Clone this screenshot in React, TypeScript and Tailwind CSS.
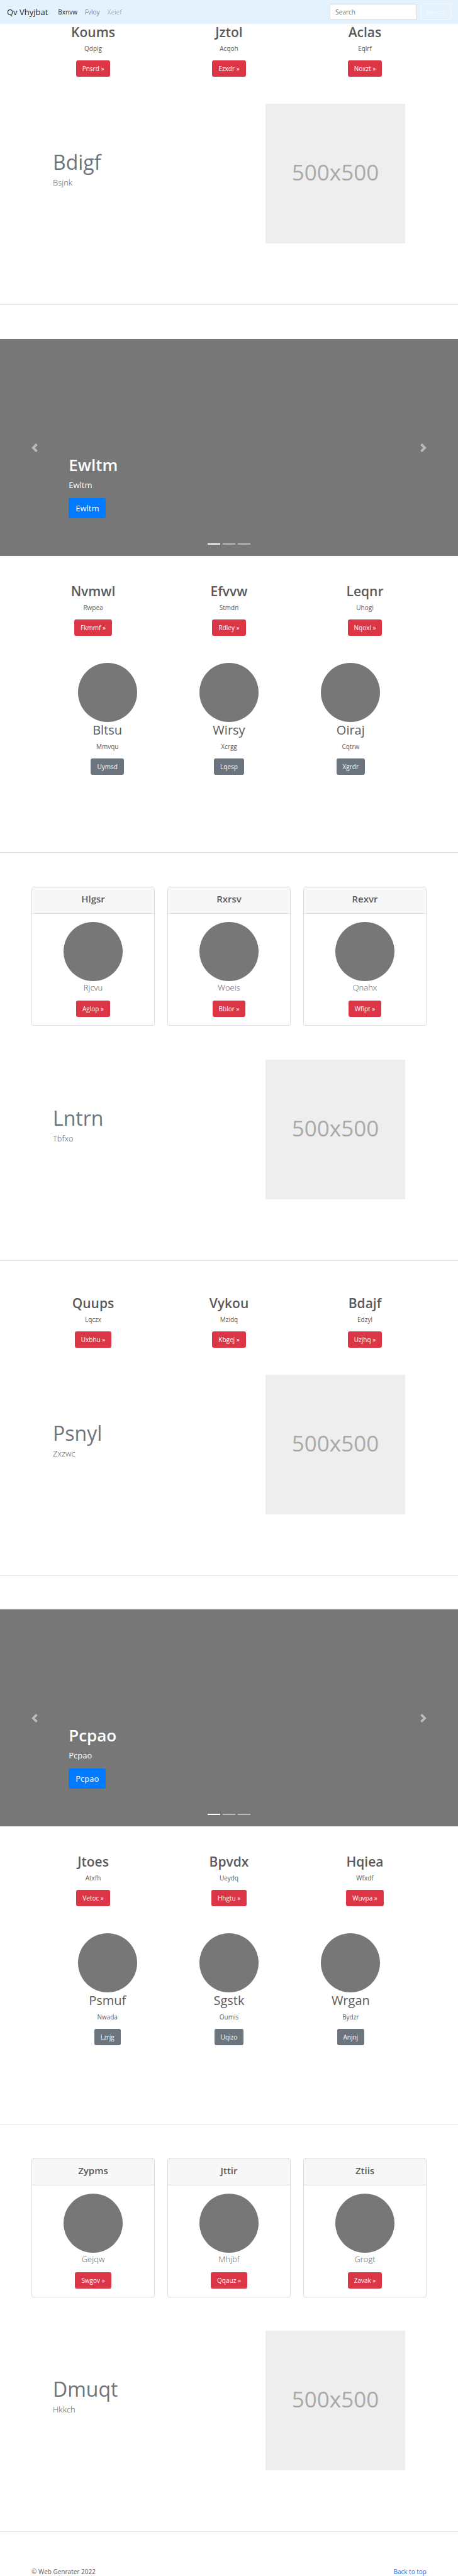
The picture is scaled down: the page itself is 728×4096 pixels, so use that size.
import type { ReactNode } from "react";

type Item = { title: string; text: string; action: string };

const intro: Item[] = [
  { title: "Koums", text: "Qdpig", action: "Pnsrd" },
  { title: "Jztol", text: "Acqoh", action: "Ezxdr" },
  { title: "Aclas", text: "Eqlrf", action: "Noxzt" },
];
const firstColumns: Item[] = [
  { title: "Nvmwl", text: "Rwpea", action: "Fkmmf" },
  { title: "Efvvw", text: "Stmdn", action: "Rdley" },
  { title: "Leqnr", text: "Uhogi", action: "Nqoxl" },
];
const firstCircles: Item[] = [
  { title: "Bltsu", text: "Mmvqu", action: "Uymsd" },
  { title: "Wirsy", text: "Xcrgg", action: "Lqesp" },
  { title: "Oiraj", text: "Cqtrw", action: "Xgrdr" },
];
const firstCards: Item[] = [
  { title: "Hlgsr", text: "Rjcvu", action: "Aglop" },
  { title: "Rxrsv", text: "Woeis", action: "Bblor" },
  { title: "Rexvr", text: "Qnahx", action: "Wfipt" },
];
const middleColumns: Item[] = [
  { title: "Quups", text: "Lqczx", action: "Uxbhu" },
  { title: "Vykou", text: "Mzidq", action: "Kbgej" },
  { title: "Bdajf", text: "Edzyl", action: "Uzjhq" },
];
const secondColumns: Item[] = [
  { title: "Jtoes", text: "Atxfh", action: "Vetoc" },
  { title: "Bpvdx", text: "Ueydq", action: "Hhgtu" },
  { title: "Hqiea", text: "Wfxdf", action: "Wuvpa" },
];
const secondCircles: Item[] = [
  { title: "Psmuf", text: "Nwada", action: "Lzrjg" },
  { title: "Sgstk", text: "Oumis", action: "Uqizo" },
  { title: "Wrgan", text: "Bydzr", action: "Anjnj" },
];
const secondCards: Item[] = [
  { title: "Zypms", text: "Gejqw", action: "Swgov" },
  { title: "Jttir", text: "Mhjbf", action: "Qqauz" },
  { title: "Ztiis", text: "Grogt", action: "Zavak" },
];

function ActionButton({ tone, children }: { tone: string; children: ReactNode }) {
  return (
    <a href="#" className={`flex h-[26px] items-center rounded-[3px] px-[10px] text-[10px] leading-4 text-white ${tone}`}>
      {children}
    </a>
  );
}

function Navbar() {
  return (
    <nav className="flex h-[38px] items-center bg-[#e3f2fd] px-[11px]">
      <a href="#" className="text-[13px] leading-5 text-black/90">Qv Vhyjbat</a>
      <div className="ml-4 flex flex-1 gap-3 text-[10px] leading-4">
        <a href="#" className="text-black/90">Bxnvw</a>
        <a href="#" className="text-black/50">Fvloy</a>
        <a href="#" className="text-black/30">Xeief</a>
      </div>
      <form className="flex gap-[6px]">
        <input
          type="search"
          aria-label="Search"
          placeholder="Search"
          className="h-[26px] w-[139px] rounded-[3px] border border-[#ced4da] bg-white px-2 text-[10px] text-[#495057] placeholder:text-[#6c757d]"
        />
        <button type="button" className="h-[26px] rounded-[3px] border border-[#f8f9fa] px-[7px] text-[10px] leading-4 text-[#f8f9fa]">
          Search
        </button>
      </form>
    </nav>
  );
}

function Columns({ items, className }: { items: Item[]; className: string }) {
  return (
    <section className={`grid grid-cols-3 px-10 ${className}`}>
      {items.map((item) => (
        <div key={item.title} className="flex flex-col items-center">
          <h2 className="mb-[5px] text-[21px] leading-[26px] font-semibold">{item.title}</h2>
          <p className="mb-[11px] text-[10px] leading-4">{item.text}</p>
          <ActionButton tone="bg-[#dc3545]">{item.action} »</ActionButton>
        </div>
      ))}
    </section>
  );
}

function Circle() {
  return <div className="size-[94px] rounded-full bg-[#777777]" />;
}

function Circles({ items, className }: { items: Item[]; className: string }) {
  return (
    <section className={`grid grid-cols-3 px-[74px] ${className}`}>
      {items.map((item) => (
        <div key={item.title} className="flex flex-col items-center">
          <Circle />
          <h2 className="mb-[5px] text-[20px] leading-[26px]">{item.title}</h2>
          <p className="mb-[11px] text-[10px] leading-4">{item.text}</p>
          <ActionButton tone="bg-[#6c757d]">{item.action}</ActionButton>
        </div>
      ))}
    </section>
  );
}

function Cards({ items, className }: { items: Item[]; className: string }) {
  return (
    <section className={`grid grid-cols-3 gap-5 px-[50px] ${className}`}>
      {items.map((item) => (
        <article key={item.title} className="overflow-hidden rounded-[3px] border border-[#dfdfdf] bg-white">
          <header className="h-[42px] border-b border-[#dfdfdf] bg-[#f7f7f7] pt-2">
            <h4 className="text-center text-[15px] leading-5 font-semibold">{item.title}</h4>
          </header>
          <div className="flex flex-col items-center py-[13px]">
            <Circle />
            <p className="mb-[11px] text-[13px] leading-5 font-light">{item.text}</p>
            <ActionButton tone="bg-[#dc3545]">{item.action} »</ActionButton>
          </div>
        </article>
      ))}
    </section>
  );
}

function Featurette({ title, text, className }: { title: string; text: string; className: string }) {
  return (
    <section className={`flex items-center justify-between px-[84px] ${className}`}>
      <div>
        <h2 className="mb-[5px] text-[32px] leading-[34px] text-[#6c757d]">{title}</h2>
        <p className="mb-[11px] text-[13px] leading-5 font-light">{text}</p>
      </div>
      <div className="flex size-[222px] items-center justify-center bg-[#eeeeee] pb-1 text-[35px] leading-10 text-[#aaaaaa]">
        500x500
      </div>
    </section>
  );
}

function Carousel({ label, className }: { label: string; className: string }) {
  return (
    <section className={`relative flex h-[345px] flex-col items-start justify-end bg-[#777777] pb-[60px] pl-[15%] text-white ${className}`}>
      <h1 className="mb-[5px] text-[26px] leading-[33px] font-semibold">{label}</h1>
      <p className="mb-[11px] text-[13px] leading-5">{label}</p>
      <a href="#" className="flex h-8 items-center rounded-[3px] bg-[#007bff] px-[11px] text-[13px] leading-5">{label}</a>
      <button type="button" aria-label="Previous" className="absolute inset-y-0 left-0 flex w-[15%] items-center justify-center opacity-50">
        <svg viewBox="0 0 8 8" className="size-[14px]" fill="#fff">
          <path d="M5.25 0l-4 4 4 4 1.5-1.5-2.5-2.5 2.5-2.5-1.5-1.5z" />
        </svg>
      </button>
      <button type="button" aria-label="Next" className="absolute inset-y-0 right-0 flex w-[15%] items-center justify-center opacity-50">
        <svg viewBox="0 0 8 8" className="size-[14px]" fill="#fff">
          <path d="M2.75 0l-1.5 1.5 2.5 2.5-2.5 2.5 1.5 1.5 4-4-4-4z" />
        </svg>
      </button>
      <div className="absolute inset-x-0 bottom-[18px] flex justify-center gap-1">
        <span className="h-[2px] w-5 bg-white" />
        <span className="h-[2px] w-5 bg-white/50" />
        <span className="h-[2px] w-5 bg-white/50" />
      </div>
    </section>
  );
}

function Divider({ className }: { className: string }) {
  return <hr className={`border-t border-[#e5e5e5] ${className}`} />;
}

export default function App() {
  return (
    <div className="flow-root bg-white font-['Open_Sans','Noto_Sans',sans-serif] text-[#5a5a5a]">
      <Navbar />
      <main>
        <Columns items={intro} className="mt-0" />
        <Featurette title="Bdigf" text="Bsjnk" className="mt-[43px]" />
        <Divider className="mt-[97px]" />

        <Carousel label="Ewltm" className="mt-[54px]" />
        <Columns items={firstColumns} className="mt-[43px]" />
        <Circles items={firstCircles} className="mt-[43px]" />
        <Divider className="mt-[123px]" />
        <Cards items={firstCards} className="mt-[54px]" />
        <Featurette title="Lntrn" text="Tbfxo" className="mt-[54px]" />
        <Divider className="mt-[97px]" />

        <Columns items={middleColumns} className="mt-[54px]" />
        <Featurette title="Psnyl" text="Zxzwc" className="mt-[43px]" />
        <Divider className="mt-[97px]" />

        <Carousel label="Pcpao" className="mt-[53px]" />
        <Columns items={secondColumns} className="mt-[43px]" />
        <Circles items={secondCircles} className="mt-[43px]" />
        <Divider className="mt-[125px]" />
        <Cards items={secondCards} className="mt-[54px]" />
        <Featurette title="Dmuqt" text="Hkkch" className="mt-[53px]" />
        <Divider className="mt-[97px]" />
      </main>
      <footer className="mt-14 flex justify-between px-[50px] text-[10px] leading-[14px]">
        <p>© Web Genrater 2022</p>
        <a href="#" className="text-[#007bff]">Back to top</a>
      </footer>
    </div>
  );
}
